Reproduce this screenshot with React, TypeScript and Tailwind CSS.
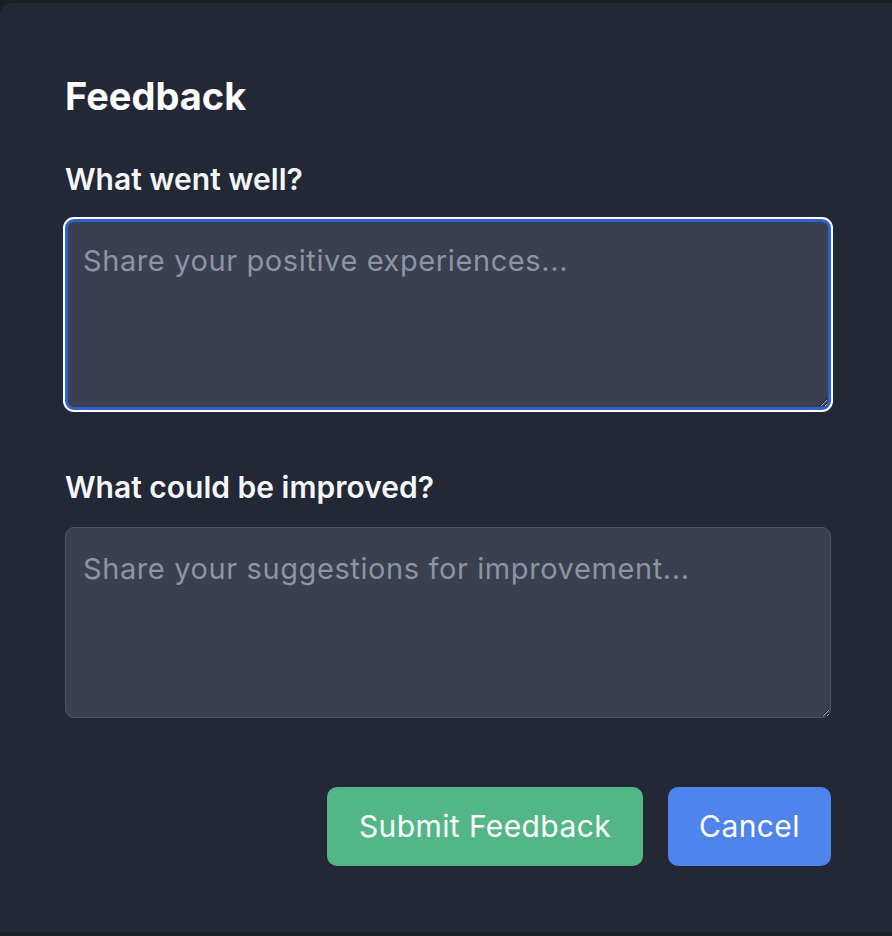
import React from 'react';

export default function App() {
  const [wentWell, setWentWell] = React.useState('');
  const [improve, setImprove] = React.useState('');

  return (
    <div className="h-[936px] w-[892px] overflow-hidden bg-[#1b1e25] pt-[3px] font-['Inter',sans-serif]">
      <div className="flex h-[929px] flex-col rounded-tl-xl bg-[#222836] pl-[65px] pr-[61px] pt-[71px]">
        <h2 className="text-[38px] font-bold leading-[44px] text-white">Feedback</h2>

        <label className="mt-[43px] block text-[30px] font-semibold leading-[36px] text-[#f5f6f8]">
          What went well?
        </label>
        <textarea
          value={wentWell}
          onChange={(e) => setWentWell(e.target.value)}
          placeholder="Share your positive experiences..."
          className="mt-[22px] h-[191px] w-full rounded-[9px] border-[3px] border-[#2d62d1] bg-[#3a4050] px-[15px] pt-[21px] text-[29px] leading-[36px] tracking-[0.6px] text-white shadow-[0_0_0_2px_#ffffff] outline-none placeholder:text-[#8d94a2]"
        />

        <label className="mt-[59px] block text-[30px] font-semibold leading-[36px] text-[#f5f6f8]">
          What could be improved?
        </label>
        <textarea
          value={improve}
          onChange={(e) => setImprove(e.target.value)}
          placeholder="Share your suggestions for improvement..."
          className="mt-[22px] h-[191px] w-full rounded-[9px] border border-[#4d5564] bg-[#3a4050] px-[17px] pt-[23px] text-[29px] leading-[36px] tracking-[0.6px] text-white outline-none placeholder:text-[#8d94a2]"
        />

        <div className="mt-[69px] flex justify-end gap-[25px]">
          <button className="h-[79px] w-[316px] rounded-[10px] bg-[#53b687] text-[30px] tracking-[0.4px] text-white">
            Submit Feedback
          </button>
          <button className="h-[79px] w-[163px] rounded-[10px] bg-[#4f84ed] text-[30px] tracking-[0.4px] text-white">
            Cancel
          </button>
        </div>
      </div>
    </div>
  );
}
